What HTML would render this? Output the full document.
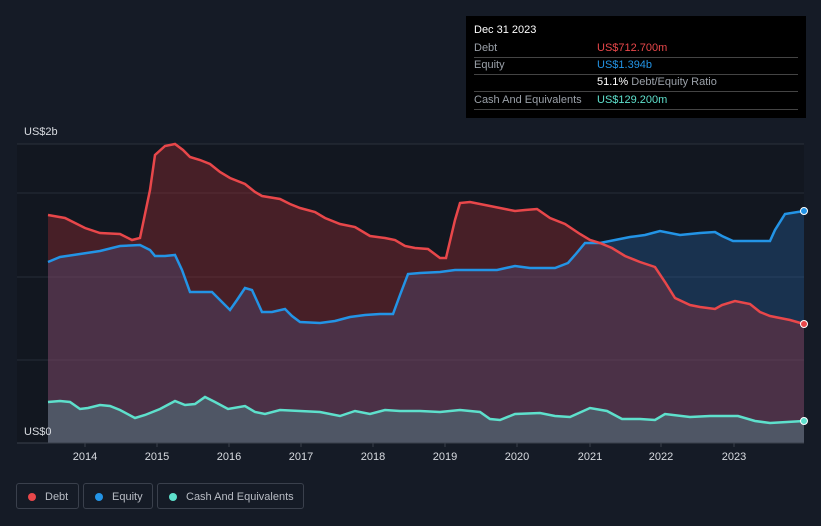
<!DOCTYPE html>
<html><head><meta charset="utf-8"><style>
body{margin:0;background:#151b26;width:821px;height:526px;overflow:hidden;font-family:"Liberation Sans",sans-serif;position:relative}
.tt{position:absolute;left:466px;top:16px;width:340px;height:102px;background:#000;}
.tt .r{position:absolute;left:8px;width:324px;border-bottom:1px solid #444;font-size:11px;color:#9aa0a8;height:17px;line-height:17px}
.tt .v{position:absolute;left:123px}
.lg{position:absolute;top:483px;height:26px;border:1px solid #3a404c;border-radius:3px;color:#b8bcc4;font-size:11px;line-height:26px;box-sizing:border-box}
.lg i{position:absolute;left:11px;top:9px;width:8px;height:8px;border-radius:50%}
</style></head><body>
<svg width="821" height="526" style="position:absolute;left:0;top:0">
<rect x="17" y="144" width="787" height="299" fill="#121720"/>
<line x1="17" y1="144" x2="804" y2="144" stroke="#2a303b"/>
<line x1="17" y1="193" x2="804" y2="193" stroke="#262c37"/>
<line x1="17" y1="277" x2="804" y2="277" stroke="#262c37"/>
<line x1="17" y1="360" x2="804" y2="360" stroke="#262c37"/>
<path d="M48,262 L60,257 80,254 100,251 120,246 140,245 150,250 155,256 165,256 175,255 182,270 190,292 200,292 212,292 220,300 230,310 237,300 245,288 252,290 262,312 272,312 285,309 292,316 300,322 320,323 335,321 350,317 365,315 380,314 393,314 400,295 408,274 420,273 440,272 455,270 475,270 497,270 515,266 530,268 555,268 568,263 575,255 585,243 600,243 615,240 630,237 645,235 660,231 680,235 700,233 715,232 722,236 733,241 770,241 775,230 785,214 804,211 L804,443 48,443Z" fill="rgba(40,110,180,0.32)"/>
<path d="M48,215 L65,218 85,228 100,233 120,234 132,240 140,238 150,190 155,155 165,146 175,144 183,150 190,157 200,160 210,164 220,172 230,178 245,184 255,192 262,196 280,199 290,204 300,208 315,212 325,218 340,224 355,227 370,236 385,238 395,240 405,246 415,248 428,249 440,258 446,258 455,220 460,203 470,202 485,205 500,208 515,211 525,210 537,209 550,218 565,224 580,234 590,240 600,243 612,248 625,256 640,262 655,267 665,282 675,298 690,305 700,307 715,309 722,305 735,301 750,304 760,312 770,316 790,320 804,324 L804,443 48,443Z" fill="rgba(180,50,55,0.33)"/>
<path d="M48,402 L60,401 70,402 80,409 88,408 100,405 110,406 120,410 135,418 145,415 160,409 175,401 185,405 195,404 205,397 215,402 228,409 245,406 255,412 265,414 280,410 300,411 320,412 340,416 355,411 370,414 385,410 400,411 420,411 440,412 460,410 480,412 490,419 500,420 515,414 540,413 555,416 570,417 590,408 607,411 622,419 640,419 655,420 665,414 690,417 710,416 738,416 755,421 770,423 804,421 L804,443 48,443Z" fill="rgba(90,200,190,0.25)"/>
<path d="M48,262 L60,257 80,254 100,251 120,246 140,245 150,250 155,256 165,256 175,255 182,270 190,292 200,292 212,292 220,300 230,310 237,300 245,288 252,290 262,312 272,312 285,309 292,316 300,322 320,323 335,321 350,317 365,315 380,314 393,314 400,295 408,274 420,273 440,272 455,270 475,270 497,270 515,266 530,268 555,268 568,263 575,255 585,243 600,243 615,240 630,237 645,235 660,231 680,235 700,233 715,232 722,236 733,241 770,241 775,230 785,214 804,211" fill="none" stroke="#2394e6" stroke-width="2.5"/>
<path d="M48,215 L65,218 85,228 100,233 120,234 132,240 140,238 150,190 155,155 165,146 175,144 183,150 190,157 200,160 210,164 220,172 230,178 245,184 255,192 262,196 280,199 290,204 300,208 315,212 325,218 340,224 355,227 370,236 385,238 395,240 405,246 415,248 428,249 440,258 446,258 455,220 460,203 470,202 485,205 500,208 515,211 525,210 537,209 550,218 565,224 580,234 590,240 600,243 612,248 625,256 640,262 655,267 665,282 675,298 690,305 700,307 715,309 722,305 735,301 750,304 760,312 770,316 790,320 804,324" fill="none" stroke="#e8474a" stroke-width="2.5"/>
<path d="M48,402 L60,401 70,402 80,409 88,408 100,405 110,406 120,410 135,418 145,415 160,409 175,401 185,405 195,404 205,397 215,402 228,409 245,406 255,412 265,414 280,410 300,411 320,412 340,416 355,411 370,414 385,410 400,411 420,411 440,412 460,410 480,412 490,419 500,420 515,414 540,413 555,416 570,417 590,408 607,411 622,419 640,419 655,420 665,414 690,417 710,416 738,416 755,421 770,423 804,421" fill="none" stroke="#5ee0cc" stroke-width="2.5"/>
<circle cx="804" cy="211" r="3.5" fill="#2394e6" stroke="#fff" stroke-width="1"/>
<circle cx="804" cy="324" r="3.5" fill="#e8474a" stroke="#fff" stroke-width="1"/>
<circle cx="804" cy="421" r="3.5" fill="#5ee0cc" stroke="#fff" stroke-width="1"/>
<line x1="17" y1="443" x2="804" y2="443" stroke="#3a404c"/>
<g stroke="#3a404c"><line x1="85" y1="443" x2="85" y2="447"/><line x1="157" y1="443" x2="157" y2="447"/><line x1="229" y1="443" x2="229" y2="447"/><line x1="301" y1="443" x2="301" y2="447"/><line x1="373" y1="443" x2="373" y2="447"/><line x1="445" y1="443" x2="445" y2="447"/><line x1="517" y1="443" x2="517" y2="447"/><line x1="590" y1="443" x2="590" y2="447"/><line x1="661" y1="443" x2="661" y2="447"/><line x1="734" y1="443" x2="734" y2="447"/></g>
<g fill="#d8dbe0" font-size="11" text-anchor="middle" font-family="Liberation Sans"><text x="85" y="460">2014</text><text x="157" y="460">2015</text><text x="229" y="460">2016</text><text x="301" y="460">2017</text><text x="373" y="460">2018</text><text x="445" y="460">2019</text><text x="517" y="460">2020</text><text x="590" y="460">2021</text><text x="661" y="460">2022</text><text x="734" y="460">2023</text></g>
<text x="24" y="135" fill="#d8dbe0" font-size="11">US$2b</text>
<text x="24" y="435" fill="#d8dbe0" font-size="11">US$0</text>
</svg>
<div class="tt">
<div style="position:absolute;left:8px;top:8px;color:#fff;font-size:11px">Dec 31 2023</div>
<div class="r" style="top:24px">Debt<span class="v" style="color:#e8474a">US$712.700m</span></div>
<div class="r" style="top:41px">Equity<span class="v" style="color:#2394e6">US$1.394b</span></div>
<div class="r" style="top:58px;border:none"><span class="v"><b style="color:#fff;font-weight:normal">51.1%</b> Debt/Equity Ratio</span></div>
<div class="r" style="top:75px;border-top:1px solid #444">Cash And Equivalents<span class="v" style="color:#5ee0cc">US$129.200m</span></div>
</div>
<div class="lg" style="left:16px;width:63px"><i style="background:#e8474a"></i><span style="position:absolute;left:28px">Debt</span></div>
<div class="lg" style="left:83px;width:70px"><i style="background:#2394e6"></i><span style="position:absolute;left:28px">Equity</span></div>
<div class="lg" style="left:157px;width:147px"><i style="background:#5ee0cc"></i><span style="position:absolute;left:28px">Cash And Equivalents</span></div>
</body></html>
